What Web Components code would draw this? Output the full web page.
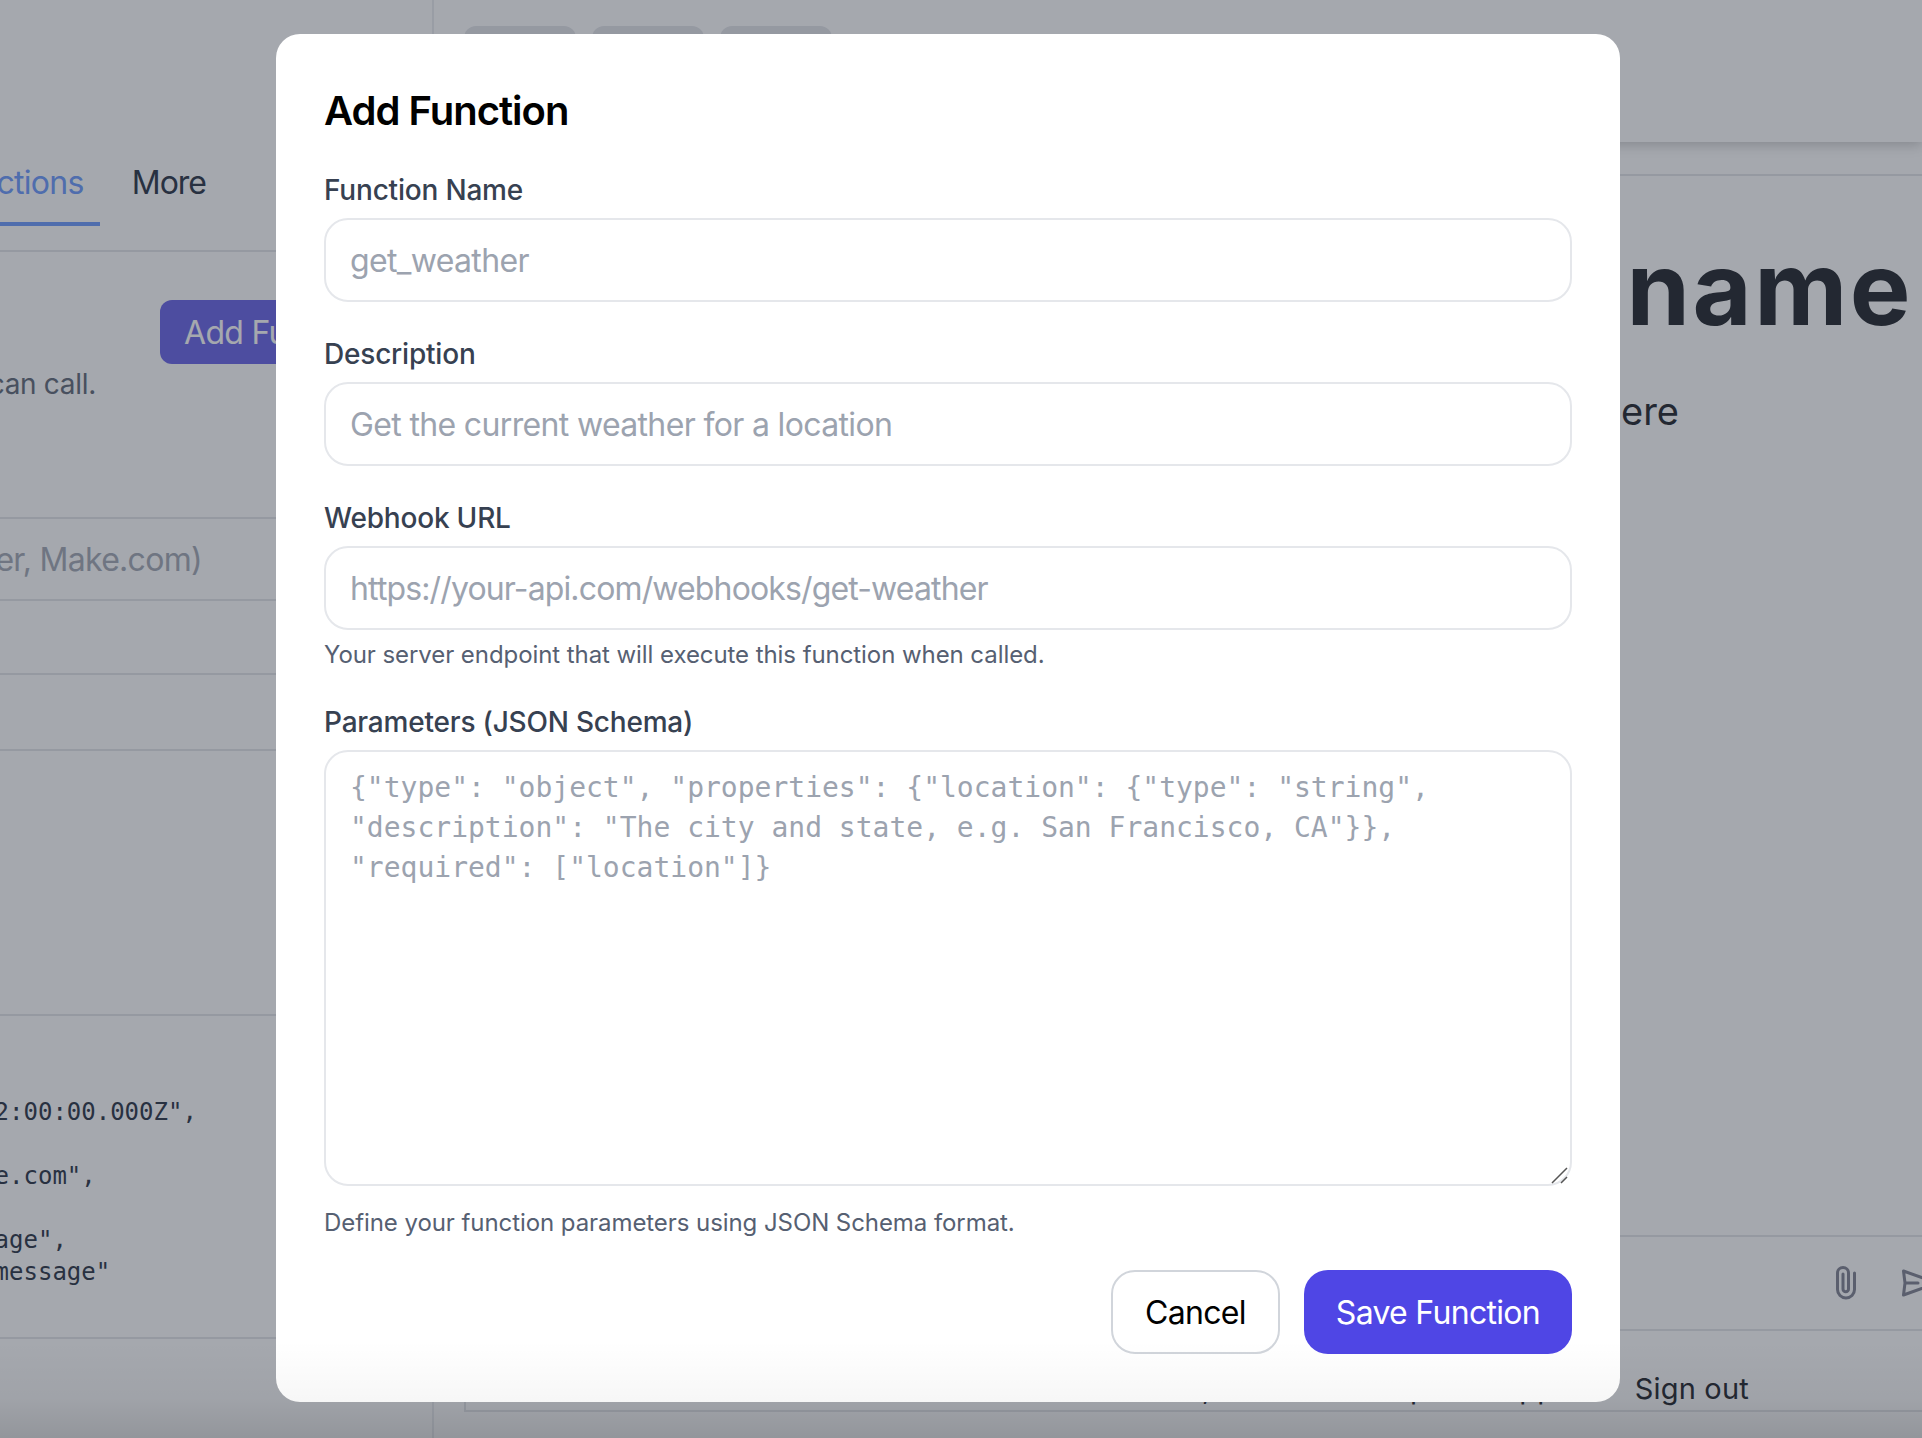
<!DOCTYPE html>
<html>
<head>
<meta charset="utf-8">
<title>Add Function</title>
<style>
    html, body { margin: 0; padding: 0; background: #fff; }
    body { width: 1922px; height: 1438px; overflow: hidden; position: relative; font-family: Inter, "Liberation Sans", sans-serif; }
</style>
</head>
<body>
<app-shell>
    <side-panel></side-panel>
    <main-panel></main-panel>
</app-shell>
<modal-overlay>
    <function-form></function-form>
</modal-overlay>
<page-fade></page-fade>

<script>
const app_shell = document.createElement('template');
app_shell.innerHTML = `
    <style>
        :host{
            display:grid;
            grid-template-columns: 432px 1fr;
            width:1922px;
            height:1438px;
            overflow:hidden;
        }
    </style>
    <slot></slot>
`;
class appshell extends HTMLElement {
    constructor() {
        super();
        this.attachShadow({ mode: 'open' });
        this.shadowRoot.appendChild(app_shell.content.cloneNode(true));
    }
}
window.customElements.define('app-shell', appshell);

const side_panel = document.createElement('template');
side_panel.innerHTML = `
    <style>
        :host{
            display:block;
            height:1438px;
            overflow:hidden;
            font-family: Inter, "Liberation Sans", sans-serif;
        }
        .row{ border-bottom:2px solid #e5e7eb; box-sizing:border-box; }
        .tabs{
            height:226px;
            display:flex;
            justify-content:flex-end;
            align-items:flex-end;
            gap:32px;
            width:206px;
        }
        .tab{
            font-size:32px;
            line-height:40px;
            letter-spacing:-1px;
            color:#374151;
            padding-bottom:23px;
            white-space:nowrap;
        }
        .tabwrap{ height:252px; border-bottom:2px solid #e5e7eb; box-sizing:border-box; }
        .tab.on{ color:#75a0fd; border-bottom:4px solid #75a0fd; padding:0 16px 19px; letter-spacing:-0.7px; }
        .intro{ height:267px; padding-top:48px; }
        .add{
            margin-left:160px;
            width:340px;
            height:64px;
            box-sizing:border-box;
            padding:0 24px;
            display:flex;
            align-items:center;
            background:#736ee9;
            color:#fff;
            border-radius:12px;
            font-size:32px;
            letter-spacing:-0.7px;
        }
        .sub{
            width:96px;
            display:flex;
            justify-content:flex-end;
            white-space:nowrap;
            font-size:28px;
            line-height:40px;
            letter-spacing:-0.3px;
            color:#6b7280;
        }
        .hook{ height:80px; display:flex; align-items:center; justify-content:flex-end; width:202px; border:0; }
        .hookrow{ height:82px; border-bottom:2px solid #e5e7eb; box-sizing:border-box; }
        .hook span{ font-size:32px; letter-spacing:-0.7px; color:#a8aeb8; white-space:nowrap; }
        .r1{ height:74px; }
        .r2{ height:76px; }
        .r3{ height:265px; }
        pre{
            margin:0 0 0 -410px;
            padding-top:48px;
            font-family:"DejaVu Sans Mono", monospace;
            font-size:24px;
            line-height:32px;
            color:#374151;
        }
        .code{ height:323px; overflow:hidden; }
    </style>
    <div class="tabwrap">
        <div class="tabs">
            <div class="tab on">Functions</div>
            <div class="tab">More</div>
        </div>
    </div>
    <div class="row intro">
        <div class="add">Add Function</div>
        <div class="sub"><span>Define tools your agent can call.</span></div>
    </div>
    <div class="hookrow">
        <div class="hook"><span>Webhook URL (Zapier, Make.com)</span></div>
    </div>
    <div class="row r1"></div>
    <div class="row r2"></div>
    <div class="row r3"></div>
    <div class="row code"><pre>{
  "timestamp": "2024-01-15T12:00:00.000Z",
  "user_id": "usr_123",
  "user_email": "user@example.com",
  "chat_id": "cht_456",
  "message_type": "user_message",
  "content": "Hello, a test message"
}</pre></div>
`;
class sidepanel extends HTMLElement {
    constructor() {
        super();
        this.attachShadow({ mode: 'open' });
        this.shadowRoot.appendChild(side_panel.content.cloneNode(true));
    }
}
window.customElements.define('side-panel', sidepanel);

const main_panel = document.createElement('template');
main_panel.innerHTML = `
    <style>
        :host{
            display:block;
            height:1438px;
            overflow:hidden;
            box-sizing:border-box;
            border-left:2px solid #eceef1;
            font-family: Inter, "Liberation Sans", sans-serif;
            color:#2f3238;
        }
        .head{
            height:142px;
            box-sizing:border-box;
            padding:26px 0 0 30px;
            display:flex;
            gap:16px;
            box-shadow:0 3px 12px rgba(0,0,0,0.2);
        }
        .skel{ width:112px; height:40px; border-radius:12px; background:#e5e7eb; }
        .box{
            margin:32px -40px 0 30px;
            height:1238px;
            box-sizing:border-box;
            border:2px solid #e5e7eb;
            display:flex;
            flex-direction:column;
        }
        .hero{ flex:1; padding:0 47px 0 0; text-align:right; overflow:hidden; white-space:nowrap; }
        .title{ font-size:102px; font-weight:700; line-height:120px; margin-top:52px; letter-spacing:2.5px; }
        .lead{ font-size:38px; line-height:56px; margin:35px 234px 0 0; }
        .composer{
            height:94px;
            box-sizing:border-box;
            border-top:2px solid #e5e7eb;
            display:flex;
            justify-content:flex-end;
            align-items:center;
            gap:44px;
            padding-right:0;
        }
        .clip{ width:22px; height:36px; }
        .send{ width:38px; height:28px; margin-right:21px; }
        .foot{
            height:81px;
            box-sizing:border-box;
            border-top:2px solid #e5e7eb;
            display:flex;
            justify-content:flex-end;
            align-items:flex-end;
            font-size:29px;
            line-height:40px;
            letter-spacing:0.2px;
            padding:0 211px 1px 0;
            white-space:nowrap;
        }
        .foot .a{ margin-right:36px; }
        .foot .b{ margin-right:71px; }
        .foot .c{ margin-right:64px; }
    </style>
    <div class="head">
        <div class="skel"></div>
        <div class="skel"></div>
        <div class="skel"></div>
    </div>
    <div class="box">
        <div class="hero">
            <div class="title">Your name</div>
            <div class="lead">Start typing here</div>
        </div>
        <div class="composer">
            <svg class="clip" viewBox="0 0 22 36" fill="none" stroke="#888b99" stroke-width="3" stroke-linecap="round">
                <path d="M19.5 8V24.5A8.5 8.5 0 0 1 2.5 24.5V8A5.5 5.5 0 0 1 13.5 8V24A2.75 2.75 0 0 1 8 24V9"/>
            </svg>
            <svg class="send" viewBox="0 0 38 28" fill="none" stroke="#888b99" stroke-width="3" stroke-linejoin="round" stroke-linecap="round">
                <path d="M2.5 2L4 14L2.5 26L36 14ZM4 14H17"/>
            </svg>
        </div>
        <div class="foot">
            <span class="a">Account,</span>
            <span class="b">Contact Help</span>
            <span class="c">Apps</span>
            <span>Sign out</span>
        </div>
    </div>
`;
class mainpanel extends HTMLElement {
    constructor() {
        super();
        this.attachShadow({ mode: 'open' });
        this.shadowRoot.appendChild(main_panel.content.cloneNode(true));
    }
}
window.customElements.define('main-panel', mainpanel);

const modal_overlay = document.createElement('template');
modal_overlay.innerHTML = `
    <style>
        :host{
            position:absolute;
            inset:0;
            display:block;
            background:rgba(17,24,39,0.375);
        }
        .card{
            position:absolute;
            left:276px;
            top:34px;
            width:1344px;
            height:1368px;
            box-sizing:border-box;
            padding:48px;
            background:#fff;
            border-radius:24px;
        }
    </style>
    <div class="card"><slot></slot></div>
`;
class modaloverlay extends HTMLElement {
    constructor() {
        super();
        this.attachShadow({ mode: 'open' });
        this.shadowRoot.appendChild(modal_overlay.content.cloneNode(true));
    }
}
window.customElements.define('modal-overlay', modaloverlay);

const form_field = document.createElement('template');
form_field.innerHTML = `
    <style>
        :host{
            display:block;
            margin-bottom:32px;
        }
        :host([help]){ margin-bottom:31px; }
        label{
            display:block;
            font-size:28px;
            line-height:40px;
            font-weight:500;
            letter-spacing:-0.2px;
            color:#374151;
            margin-bottom:8px;
        }
        .ctl{ position:relative; }
        input, textarea{
            display:block;
            width:100%;
            box-sizing:border-box;
            border:2px solid #e5e7eb;
            border-radius:24px;
            background:#fff;
            outline:none;
            padding:16px 24px;
            font-family: Inter, "Liberation Sans", sans-serif;
            font-size:32px;
            line-height:48px;
            letter-spacing:-0.65px;
            height:84px;
            color:#111827;
        }
        :host([url]) input{ letter-spacing:-0.86px; }
        textarea{
            height:436px;
            font-family:"DejaVu Sans Mono", monospace;
            font-size:28px;
            line-height:40px;
            letter-spacing:0;
            resize:none;
        }
        ::placeholder{ color:#9ca3af; opacity:1; }
        .grip{ position:absolute; right:3px; bottom:2px; width:18px; height:18px; }
        .help{
            font-size:24px;
            line-height:32px;
            letter-spacing:-0.07px;
            color:#566072;
            margin-top:9px;
        }
        .help:empty{ display:none; }
        :host([area]) .help{ margin-top:21px; }
    </style>
    <label></label>
    <div class="ctl"></div>
    <div class="help"></div>
`;
class formfield extends HTMLElement {
    constructor() {
        super();
        this.attachShadow({ mode: 'open' });
        this.shadowRoot.appendChild(form_field.content.cloneNode(true));
    }
    connectedCallback() {
        let box = this.shadowRoot.querySelector('.ctl');
        this.shadowRoot.querySelector('label').textContent = this.getAttribute('label');
        this.shadowRoot.querySelector('.help').textContent = this.getAttribute('help') || '';
        let ctl = document.createElement(this.hasAttribute('area') ? 'textarea' : 'input');
        ctl.setAttribute('placeholder', this.getAttribute('hint'));
        box.appendChild(ctl);
        if (this.hasAttribute('area')) {
            ctl.setAttribute('rows', '10');
            box.insertAdjacentHTML('beforeend', `
                <svg class="grip" viewBox="0 0 18 18" fill="none" stroke="#555" stroke-width="1.5">
                    <path d="M1 17L16 2M10 17L16 11"/>
                </svg>`);
        }
    }
}
window.customElements.define('form-field', formfield);

const function_form = document.createElement('template');
function_form.innerHTML = `
    <style>
        :host{ display:block; font-family: Inter, "Liberation Sans", sans-serif; }
        h2{
            margin:0 0 30px;
            font-size:40px;
            line-height:58px;
            font-weight:600;
            letter-spacing:-1px;
            color:#000;
        }
        .actions{
            display:flex;
            justify-content:flex-end;
            gap:24px;
        }
        button{
            height:84px;
            box-sizing:border-box;
            padding:0 32px;
            border-radius:24px;
            font-family:inherit;
            font-size:32px;
            font-weight:400;
            letter-spacing:-0.7px;
            cursor:pointer;
        }
        .cancel{ background:#fff; color:#000; border:2px solid #d1d5db; }
        .save{ background:#4f46e5; color:#fff; border:0; }
    </style>
    <h2>Add Function</h2>
    <form-field label="Function Name" hint="get_weather"></form-field>
    <form-field label="Description" hint="Get the current weather for a location"></form-field>
    <form-field url label="Webhook URL" hint="https://your-api.com/webhooks/get-weather" help="Your server endpoint that will execute this function when called."></form-field>
    <form-field area label="Parameters (JSON Schema)" hint='{"type": "object", "properties": {"location": {"type": "string", "description": "The city and state, e.g. San Francisco, CA"}}, "required": ["location"]}' help="Define your function parameters using JSON Schema format."></form-field>
    <div class="actions">
        <button class="cancel">Cancel</button>
        <button class="save">Save Function</button>
    </div>
`;
class functionform extends HTMLElement {
    constructor() {
        super();
        this.attachShadow({ mode: 'open' });
        this.shadowRoot.appendChild(function_form.content.cloneNode(true));
    }
}
window.customElements.define('function-form', functionform);

const page_fade = document.createElement('template');
page_fade.innerHTML = `
    <style>
        :host{
            position:absolute;
            left:0;
            right:0;
            bottom:0;
            height:98px;
            display:block;
            pointer-events:none;
            background:linear-gradient(to bottom, rgba(0,0,0,0), rgba(0,0,0,0.03) 60%, rgba(0,0,0,0.11));
        }
    </style>
`;
class pagefade extends HTMLElement {
    constructor() {
        super();
        this.attachShadow({ mode: 'open' });
        this.shadowRoot.appendChild(page_fade.content.cloneNode(true));
    }
}
window.customElements.define('page-fade', pagefade);
</script>
</body>
</html>
